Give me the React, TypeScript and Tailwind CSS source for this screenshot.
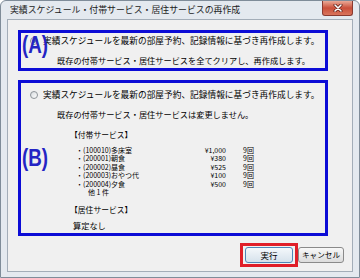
const ITEMS = [
  { code: "100010", name: "多床室", price: "¥1,000", count: "9回" },
  { code: "200001", name: "朝食", price: "¥380", count: "9回" },
  { code: "200002", name: "昼食", price: "¥525", count: "9回" },
  { code: "200003", name: "おやつ代", price: "¥100", count: "9回" },
  { code: "200004", name: "夕食", price: "¥500", count: "9回" },
];

function Radio({ checked }: { checked?: boolean }) {
  return (
    <span className="w-[8px] h-[8px] rounded-full border border-[#8d9398] bg-gradient-to-br from-[#d8dce0] to-[#fdfdfd] flex items-center justify-center shrink-0">
      {checked && <span className="w-[4px] h-[4px] rounded-full bg-[#4a76a4]" />}
    </span>
  );
}

function CloseButton() {
  return (
    <div className="w-[31px] h-[15px] rounded-b-[3px] border border-t-0 border-[#8a3a30] bg-gradient-to-b from-[#e9a997] via-[#c94f3a] to-[#d9745c] flex items-center justify-center">
      <svg width="10" height="8" viewBox="0 0 10 8">
        <path d="M2 1 L8 7 M8 1 L2 7" stroke="#5a1a12" strokeWidth="3" strokeLinecap="round" />
        <path d="M2 1 L8 7 M8 1 L2 7" stroke="#ffffff" strokeWidth="1.6" strokeLinecap="round" />
      </svg>
    </div>
  );
}

function Tag({ label, top }: { label: string; top: string }) {
  return (
    <span
      className={`absolute left-[1px] ${top} origin-left scale-x-[0.78] text-[24px] font-bold leading-none text-[#2424c4] [font-family:'Liberation_Sans',sans-serif] whitespace-nowrap`}
    >
      {label}
    </span>
  );
}

export default function App() {
  return (
    <div className="w-[360px] h-[278px] overflow-hidden bg-[#e4e9ef] border border-[#7f8c99] rounded-t-[6px] flex flex-col px-[6px] pb-[5px] text-black whitespace-nowrap [font-family:'Noto_Sans_CJK_JP',sans-serif]">
      <div className="h-[18px] flex items-start justify-between shrink-0">
        <span className="text-[8.9px] leading-[18px] pl-[3px] text-[#1b1b1b]">実績スケジュール・付帯サービス・居住サービスの再作成</span>
        <CloseButton />
      </div>

      <div className="flex-1 border border-[#a3adb8] bg-[#f0f0f0] flex flex-col pl-[10px] pt-[10px] text-[8.7px]">
        {/* option A */}
        <div className="relative w-[310px] h-[41px] border-[3px] border-[#0c0cd6] pt-[1px]">
          <div className="flex items-center h-[13px] pl-[9px]">
            <Radio checked />
            <span className="ml-[5px] leading-[13px]">実績スケジュールを最新の部屋予約、記録情報に基づき再作成します。</span>
          </div>
          <div className="mt-[7px] h-[13px] leading-[13px] pl-[36px] text-[8.2px]">既存の付帯サービス・居住サービスを全てクリアし、再作成します。</div>
          <Tag label="(A)" top="top-0" />
        </div>

        {/* option B */}
        <div className="relative mt-[9px] w-[310px] h-[156px] border-[3px] border-[#0c0cd6] pt-[5px]">
          <div className="flex items-center h-[13px] pl-[9px]">
            <Radio />
            <span className="ml-[5px] leading-[13px]">実績スケジュールを最新の部屋予約、記録情報に基づき再作成します。</span>
          </div>
          <div className="mt-[7px] h-[13px] leading-[13px] pl-[36px] text-[8.2px]">既存の付帯サービス・居住サービスは変更しません。</div>
          <div className="mt-[7px] h-[13px] leading-[13px] pl-[49px] text-[7.8px]">【付帯サービス】</div>

          <div className="mt-[5px] pl-[55px] text-[7px] leading-[8.4px]">
            {ITEMS.map((it) => (
              <div key={it.code} className="flex h-[8.4px]">
                <span className="w-[110px]">・({it.code}){it.name}</span>
                <span className="w-[40px] text-right">{it.price}</span>
                <span className="ml-[17px]">{it.count}</span>
              </div>
            ))}
            <div className="h-[8.4px] pl-[12px]">他 1 件</div>
          </div>

          <div className="mt-[7px] h-[13px] leading-[13px] pl-[49px] text-[7.8px]">【居住サービス】</div>
          <div className="mt-[3px] h-[13px] leading-[13px] pl-[52px] text-[8.2px]">算定なし</div>
          <Tag label="(B)" top="top-[63px]" />
        </div>

        {/* buttons */}
        <div className="mt-[7px] flex justify-end items-center pr-[8px]">
          <div className="h-[24px] border-[3px] border-[#e01e28] px-[2px] flex items-center">
            <button className="w-[48px] h-[16px] rounded-[3px] border border-[#4f86b6] bg-gradient-to-b from-[#f4f8fb] to-[#d6e2ec] text-[8.5px] leading-none">実行</button>
          </div>
          <button className="w-[46px] h-[16px] rounded-[3px] border border-[#8a8a8a] bg-gradient-to-b from-[#f8f8f8] to-[#dcdcdc] text-[7.6px] leading-none">キャンセル</button>
        </div>
      </div>
    </div>
  );
}
